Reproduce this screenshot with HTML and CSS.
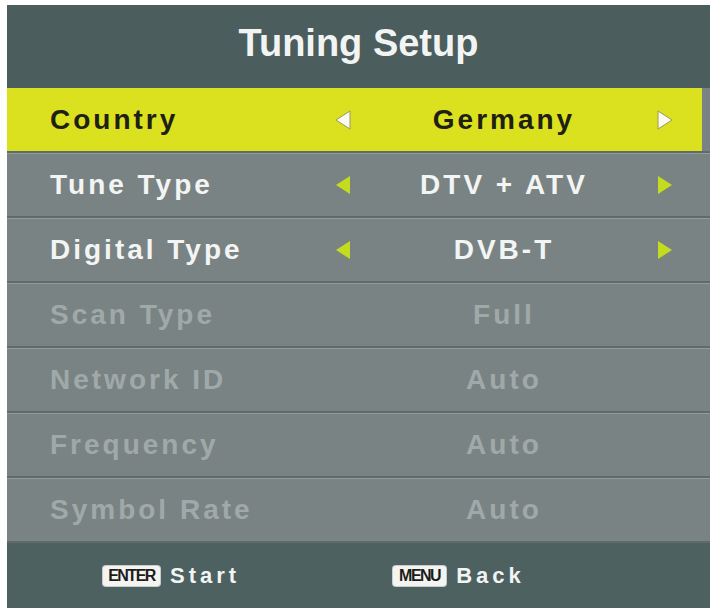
FILE: index.html
```html
<!DOCTYPE html>
<html>
<head>
<meta charset="utf-8">
<link rel="stylesheet" href="styles.css">
</head>
<body>
<div class="panel">
  <div class="header">Tuning Setup</div>
  <div class="rows">
    <div class="row active">
      <div class="cell-inner">
        <span class="label">Country</span>
        <span class="arrow"><svg viewBox="0 0 18 22" width="18" height="22"><polygon points="16,2 2,11 16,20" class="tri-w"/></svg></span>
        <span class="value">Germany</span>
        <span class="arrow"><svg viewBox="0 0 18 22" width="18" height="22"><polygon points="2,2 16,11 2,20" class="tri-w"/></svg></span>
      </div>
    </div>
    <div class="row">
      <div class="cell-inner">
        <span class="label">Tune Type</span>
        <span class="arrow"><svg viewBox="0 0 18 22" width="18" height="22"><polygon points="16,2 2,11 16,20" class="tri-y"/></svg></span>
        <span class="value">DTV + ATV</span>
        <span class="arrow"><svg viewBox="0 0 18 22" width="18" height="22"><polygon points="2,2 16,11 2,20" class="tri-y"/></svg></span>
      </div>
    </div>
    <div class="row">
      <div class="cell-inner">
        <span class="label">Digital Type</span>
        <span class="arrow"><svg viewBox="0 0 18 22" width="18" height="22"><polygon points="16,2 2,11 16,20" class="tri-y"/></svg></span>
        <span class="value">DVB-T</span>
        <span class="arrow"><svg viewBox="0 0 18 22" width="18" height="22"><polygon points="2,2 16,11 2,20" class="tri-y"/></svg></span>
      </div>
    </div>
    <div class="row disabled">
      <div class="cell-inner">
        <span class="label">Scan Type</span>
        <span class="arrow"></span>
        <span class="value">Full</span>
        <span class="arrow"></span>
      </div>
    </div>
    <div class="row disabled">
      <div class="cell-inner">
        <span class="label">Network ID</span>
        <span class="arrow"></span>
        <span class="value">Auto</span>
        <span class="arrow"></span>
      </div>
    </div>
    <div class="row disabled">
      <div class="cell-inner">
        <span class="label">Frequency</span>
        <span class="arrow"></span>
        <span class="value">Auto</span>
        <span class="arrow"></span>
      </div>
    </div>
    <div class="row disabled">
      <div class="cell-inner">
        <span class="label">Symbol Rate</span>
        <span class="arrow"></span>
        <span class="value">Auto</span>
        <span class="arrow"></span>
      </div>
    </div>
  </div>
  <div class="footer">
    <div class="hint"><span class="key key-enter">ENTER</span><span class="hint-text">Start</span></div>
    <div class="hint"><span class="key key-menu">MENU</span><span class="hint-text">Back</span></div>
  </div>
</div>
</body>
</html>
```
FILE: styles.css
```css
html, body {
  margin: 0;
  padding: 0;
  background: #ffffff;
}
body {
  padding: 5px 0 0 7px;
  font-family: "Liberation Sans", Arial, sans-serif;
}
.panel {
  width: 703px;
  display: flex;
  flex-direction: column;
  background: #7a8383;
}
.header {
  height: 83px;
  box-sizing: border-box;
  padding-bottom: 6px;
  background: #4b5d5d;
  color: #f2f4f3;
  font-size: 38px;
  font-weight: bold;
  display: flex;
  align-items: center;
  justify-content: center;
}
.rows {
  display: flex;
  flex-direction: column;
}
.row {
  height: 65px;
  box-sizing: border-box;
  border-top: 1px solid #939c9c;
  border-bottom: 2px solid #5f6a6a;
  background: #7a8383;
  display: flex;
}
.row.active {
  border-top: none;
}
.cell-inner {
  flex: 1;
  display: grid;
  grid-template-columns: 281px 24px 298px 24px;
  align-items: center;
  padding-left: 43px;
  color: #f3f5f4;
  font-size: 28px;
  font-weight: bold;
  letter-spacing: 3px;
}
.row.active .cell-inner {
  background: #dbe11f;
  color: #1e2014;
  margin-right: 8px;
}
.row.disabled .cell-inner {
  color: #a0a9a9;
}
.label {
  white-space: nowrap;
}
.value {
  text-align: center;
  white-space: nowrap;
}
.arrow {
  display: flex;
  justify-content: center;
  align-items: center;
}
.arrow svg {
  display: block;
}
.tri-w {
  fill: #fbfbf4;
  stroke: #9a9c5a;
  stroke-width: 1;
}
.tri-y {
  fill: #c5dc1e;
}
.footer {
  height: 65px;
  background: #4d6161;
  display: flex;
  align-items: center;
  padding-left: 96px;
  gap: 153px;
}
.hint {
  display: flex;
  align-items: center;
  gap: 10px;
}
.key {
  display: inline-block;
  background: #f4f4f0;
  color: #1c1c1c;
  border-radius: 3px;
  height: 20px;
  line-height: 20px;
  font-size: 16px;
  font-weight: bold;
  letter-spacing: -1.5px;
  text-align: center;
  box-shadow: 0 0 0 1px #c8cccc;
}
.key-enter {
  width: 57px;
}
.key-menu {
  width: 53px;
}
.hint-text {
  color: #f2f4f3;
  font-size: 22px;
  font-weight: bold;
  letter-spacing: 4px;
}
```
